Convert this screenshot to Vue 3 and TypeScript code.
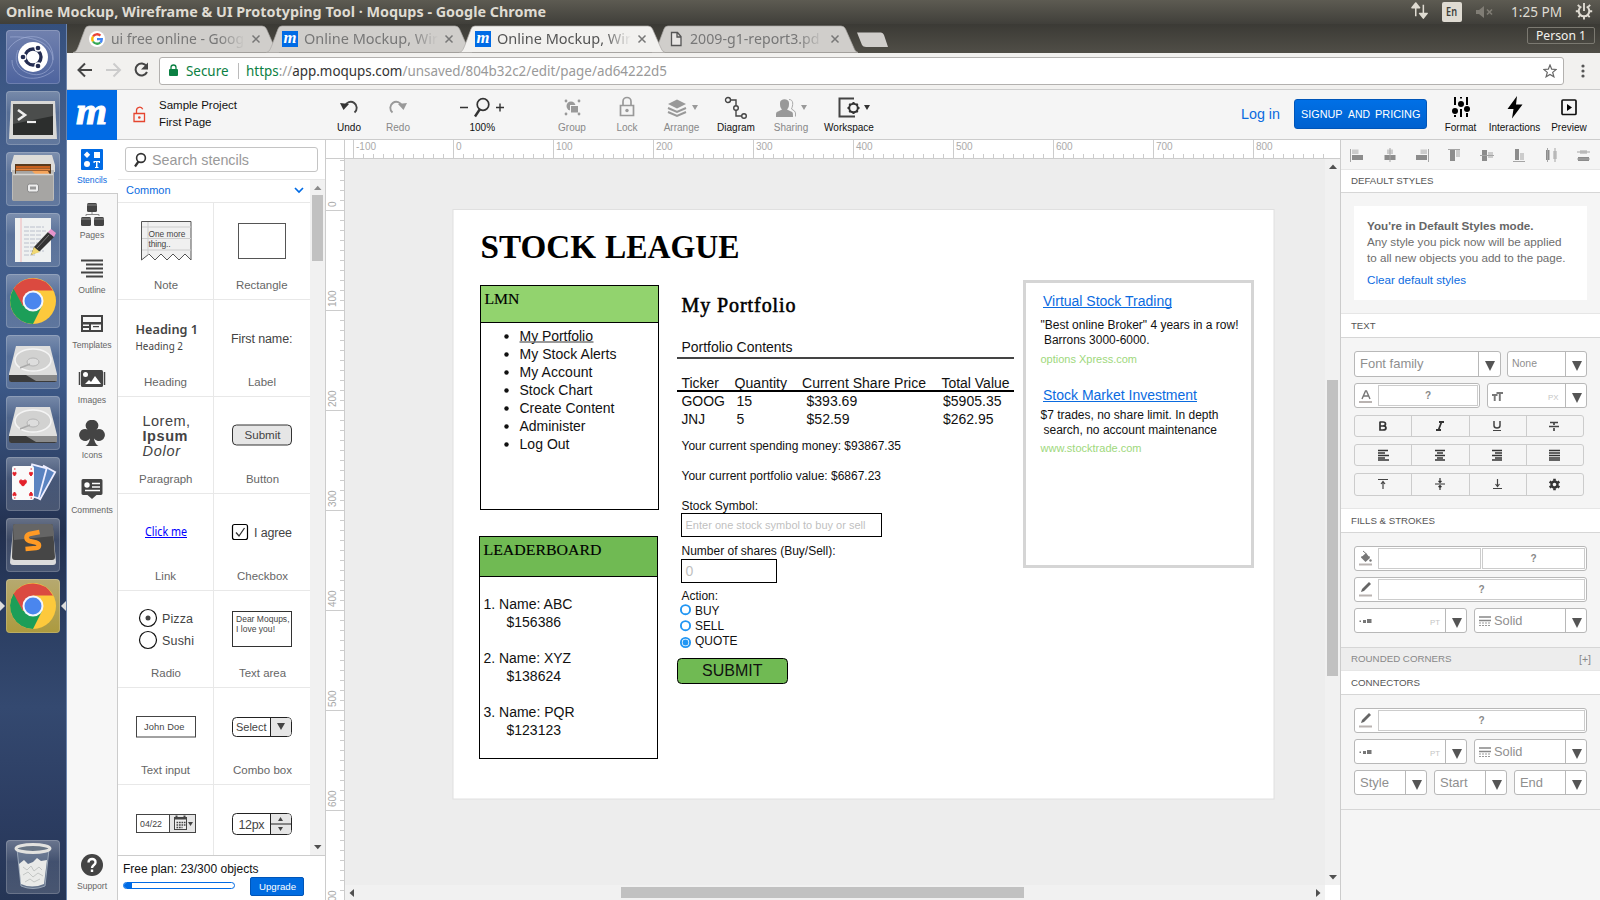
<script setup lang="ts">
import { h } from 'vue'

interface FitProps { t: string; w: number; s?: number }

// One line of text laid out at a fixed advance width.
const FitText = (p: FitProps) => {
  const size = p.s ?? 12
  const height = Math.round(size * 1.25)
  return h('svg', { width: p.w, height, 'font-size': size, fill: 'currentColor', overflow: 'visible' }, [
    h('text', { x: 0, y: Math.round(size * 0.98), textLength: p.w, lengthAdjust: 'spacingAndGlyphs' }, p.t),
  ])
}
FitText.props = ['t', 'w', 's']

const tabs = [
  { title: 'ui free online - Goog', w: 133, icon: 'google', active: false },
  { title: 'Online Mockup, Wir', w: 134, icon: 'm', active: false },
  { title: 'Online Mockup, Wir', w: 134, icon: 'm', active: true },
  { title: '2009-g1-report3.pd', w: 129.5, icon: 'file', active: false },
]

const launchers = ['dash', 'term', 'files', 'edit', 'chrome', 'disk', 'disk', 'cards', 'sublime', 'chrome on']

const navItems = ['Stencils', 'Pages', 'Outline', 'Templates', 'Images', 'Icons', 'Comments']

const stencils: { label: string; w: number }[] = [
  { label: 'Note', w: 24 }, { label: 'Rectangle', w: 51.5 },
  { label: 'Heading', w: 43 }, { label: 'Label', w: 28 },
  { label: 'Paragraph', w: 53.5 }, { label: 'Button', w: 33 },
  { label: 'Link', w: 21 }, { label: 'Checkbox', w: 51 },
  { label: 'Radio', w: 30 }, { label: 'Text area', w: 47 },
  { label: 'Text input', w: 49 }, { label: 'Combo box', w: 59 },
  { label: 'Date', w: 0 }, { label: 'Stepper', w: 0 },
]

const hMajor = [-100, 0, 100, 200, 300, 400, 500, 600, 700, 800]
const hMinor = Array.from({ length: 98 }, (_, i) => 353 + i * 10).filter((x) => x < 1340 && (x - 353) % 100 !== 0)
const vMajor = [0, 100, 200, 300, 400, 500, 600, 700]
const vMinor = Array.from({ length: 74 }, (_, i) => 160 + i * 10).filter((y) => (y - 210) % 100 !== 0)

type Line = [text: string, x: number, y: number, width: number]
const menu: [string, number][] = [
  ['My Portfolio', 73.5], ['My Stock Alerts', 97], ['My Account', 73], ['Stock Chart', 73],
  ['Create Content', 95], ['Administer', 66], ['Log Out', 50],
]
const body14: Line[] = [
  ['1. Name: ABC', 483.5, 609, 89], ['$156386', 506.5, 627, 54.5],
  ['2. Name: XYZ', 483.5, 663, 87.5], ['$138624', 506.5, 681, 54.5],
  ['3. Name: PQR', 483.5, 717, 91], ['$123123', 506.5, 735, 54.5],
  ['Portfolio Contents', 681.5, 352, 111],
  ['Ticker', 681.5, 388, 37.5], ['Quantity', 734.5, 388, 52.5], ['Current Share Price', 802, 388, 124], ['Total Value', 941.5, 388, 68],
  ['GOOG', 681.5, 406, 43.5], ['15', 736.5, 406, 15.7], ['$393.69', 806.5, 406, 50.7], ['$5905.35', 943, 406, 58.5],
  ['JNJ', 681.5, 424, 23.5], ['5', 736.5, 424, 7.8], ['$52.59', 806.5, 424, 43], ['$262.95', 943, 424, 50.5],
]
const body12: Line[] = [
  ['Your current spending money: $93867.35', 681.5, 450, 219.5],
  ['Your current portfolio value: $6867.23', 681.5, 480, 199.5],
  ['Stock Symbol:', 681.5, 510, 76.5],
  ['Number of shares (Buy/Sell):', 681.5, 555, 154],
  ['Action:', 681.5, 600, 36.5],
  ['BUY', 695, 615, 24.5], ['SELL', 695, 630, 29], ['QUOTE', 695, 645, 42.5],
  ['"Best online Broker" 4 years in a row!', 1040.5, 329, 198],
  ['Barrons 3000-6000.', 1044, 344, 105.5],
  ['$7 trades, no share limit. In depth', 1040.5, 419, 178],
  ['search, no account maintenance', 1043.5, 434, 173.5],
]
</script>

<template>
  <div class="desktop">
    <header class="menubar">
      <FitText class="win-title" t="Online Mockup, Wireframe &amp; UI Prototyping Tool · Moqups - Google Chrome" :w="540" :s="14.5" />
      <div class="tray">
        <svg width="18" height="18"><path d="M5 15V5M1 6L5 1L9 6ZM13 3V13M9 12L13 17L17 12Z" fill="#dfdbd2" stroke="#dfdbd2" stroke-width="1.6" stroke-linejoin="round" transform="scale(.95)" /></svg>
        <span class="lang"><FitText t="En" :w="11" :s="12" /></span>
        <svg class="mute" width="20" height="14"><path d="M1 5h3l5-4v12l-5-4H1z" fill="#807d75" /><path d="M12 4.500l5 5M17 4.500l-5 5" stroke="#807d75" stroke-width="1.600" /></svg>
        <FitText class="clock" t="1:25 PM" :w="51" :s="13.5" />
        <svg width="18" height="18" viewBox="0 0 18 18"><path d="M6.300 4.500a5.300 5.300 0 1 0 5.400 0" fill="none" stroke="#dfdbd2" stroke-width="2" /><path d="M9 1v8M4.800 4.800L2.800 2.800M13.200 4.800l2-2M3.700 9.200H.8M17.200 9.200h-2.900M5.300 13.200l-2 2M12.700 13.200l2 2M9 14.500v3" stroke="#dfdbd2" stroke-width="1.900" /></svg>
      </div>
    </header>

    <div class="below">
      <aside class="launcher">
        <div v-for="(l, i) in launchers" :key="i" class="tile" :class="l">
          <svg width="54" height="54" viewBox="0 0 54 54">
            <g v-if="l === 'dash'">
              <g fill="none" stroke="#a9b7dc" stroke-opacity=".55"><path d="M2 20C12 3 38 2 45 18S40 48 25 44 8 30 12 20M4 7C22 6 46 10 47 30M6 30c0 20 26 24 42 10" /></g>
              <circle cx="27" cy="27" r="15" fill="#fff" /><circle cx="27" cy="27" r="8" fill="none" stroke="#242d52" stroke-width="3.400" />
              <g fill="#242d52" stroke="#fff" stroke-width="1.300"><circle cx="17" cy="27" r="3" /><circle cx="32" cy="18" r="3" /><circle cx="32" cy="36" r="3" /></g>
            </g>
            <g v-else-if="l === 'term'">
              <path d="M5 10h44l2 38H3z" fill="#d8d8d6" /><rect x="7" y="13" width="40" height="31" fill="#2c2e2d" /><path d="M7 13h40v12L7 33z" fill="#4b4d4c" />
              <path d="M12 19l7 5-7 5" fill="none" stroke="#eee" stroke-width="2.600" /><path d="M21 31h9" stroke="#eee" stroke-width="2.200" />
            </g>
            <g v-else-if="l === 'files'">
              <path d="M8 3h38l3 10v7H5v-7z" fill="#dddcd9" /><path d="M6 18h42v29q0 2-2 2H8q-2 0-2-2z" fill="#bdbcba" /><path d="M9 12h36v12H9z" fill="#5a3b1f" /><path d="M10 14h34v2H10z" fill="#c8601f" /><path d="M10 16.500h34v2H10z" fill="#e8843c" /><path d="M11 19h31l2 4H10z" fill="#f5a55c" />
              <path d="M10 19h16l3 3H47v27H7V22h3z" fill="#a6a5a3" /><path d="M7 22.500h40" stroke="#d5d5d3" stroke-width="1.500" /><rect x="21.500" y="32" width="11" height="8" rx="2" fill="#eee" stroke="#8a8a8a" /><rect x="24" y="34.500" width="6" height="3" fill="#999" />
            </g>
            <g v-else-if="l === 'edit'">
              <rect x="9" y="5" width="36" height="44" fill="#eff1f1" /><path d="M15 5v44" stroke="#f0b6b8" /><path d="M18 14h20M18 18h22M18 22h17M18 26h20M18 30h14M18 34h17M18 38h20M18 42h12" stroke="#bbc0cc" stroke-width="1" stroke-dasharray="5 1" />
              <path d="M25 42l3-8L42 19l6 5-14 14z" fill="#333" /><path d="M25 42l3-8 6 5z" fill="#f0d873" /><path d="M42 19l3-3 5 4-2 4z" fill="#e694cb" /><path d="M31 35l12-13" stroke="#777" />
            </g>
            <g v-else-if="l.startsWith('chrome')">
              <circle cx="27" cy="27" r="23" fill="#fdc93c" />
              <path d="M7.100 15.500A23 23 0 0 1 47 16.500H27L17 32z" fill="#db4a40" />
              <path d="M7.600 14.700A23 23 0 0 0 27 50L36 32 27 27 17 32z" fill="#1c9e58" />
              <circle cx="27" cy="27" r="10.500" fill="#f4f6fb" /><circle cx="27" cy="27" r="8.500" fill="#4a86ee" />
            </g>
            <g v-else-if="l === 'disk'">
              <path d="M10 11h34l7 28v5q0 3-3 3H6q-3 0-3-3v-5z" fill="#dededd" /><path d="M3 40h48v5q0 2-2 2H5q-2 0-2-2z" fill="#3b3b3b" /><path d="M20 40h31v6H30z" fill="#8a8a8a" />
              <ellipse cx="27" cy="25" rx="18" ry="11" fill="#d2d2d1" stroke="#f4f4f4" stroke-width="1.500" /><ellipse cx="27" cy="27" rx="6" ry="4" fill="#ddd" stroke="#b4b4b4" /><path d="M14 33l10-4" stroke="#aaa" stroke-width="1.500" />
            </g>
            <g v-else-if="l === 'cards'">
              <g fill="#5a83c0" stroke="#eef" stroke-width="1.800"><rect x="30" y="11" width="13" height="31" transform="rotate(29 38 25)" /><rect x="22" y="9" width="15" height="31" transform="rotate(15 30 24)" /></g>
              <rect x="6" y="9" width="22" height="34" rx="2" fill="#fafafa" /><path d="M17 29c-6-4-3-8 0-5 3-3 6 1 0 5z" fill="#e3212b" stroke="#e3212b" /><path d="M8.500 19c-3-3-1-5 0-3 1-2 3 0 0 3zM25 19c-3-3-1-5 0-3 1-2 3 0 0 3zM8.500 35c-3 3-1 5 0 3 1 2 3 0 0-3zM25 35c-3 3-1 5 0 3 1 2 3 0 0-3zM8 12h1.500M24.500 12H26M8 41h1.500M24.500 41H26" fill="#e3212b" stroke="#e3212b" />
            </g>
            <g v-else>
              <path d="M7 12h40l3 32q0 3-3 3H7q-3 0-3-3z" fill="#dcdcdc" /><path d="M9 6h36q2 0 2 3l2 30q0 3-3 3H9q-3 0-3-3L7 9q0-3 2-3z" fill="#464646" /><path d="M8 22l40-4-1-10q0-2-2-2H9Q7 6 7 9z" fill="#656565" />
              <path d="M33.500 14L23.500 16q-3 1-3 3.500t3 3.500L30 24.500q3 1 3 3t-3 2.500L19.500 31" fill="none" stroke="#ff9a24" stroke-width="4.600" />
            </g>
          </svg>
          <template v-if="l === 'chrome on'"><i class="pip left"></i><i class="pip right"></i></template>
        </div>
        <div class="tile trash">
          <svg width="54" height="54" viewBox="0 0 54 54">
            <path d="M11 9l4 37q12 5 24 0l4-37z" fill="#8fa0b5" fill-opacity=".4" stroke="#9aa7b8" /><path d="M13 24l5-4 4 4 5-2 4-4 4 3 6-1-3 24q-12 5-23 0z" fill="#e9eae8" /><path d="M17 27l4 3 4-4 3 5 5-4 3 3M17 35l5-3 5 5 5-4 5 3M19 42l5-3 4 3 6-3" stroke="#c3c6c4" fill="none" />
            <ellipse cx="27" cy="8.500" rx="17" ry="4" fill="#687585" stroke="#e2e2df" stroke-width="3" />
          </svg>
        </div>
      </aside>

      <main class="chrome-win">
        <div class="tabstrip">
          <div v-for="(tab, i) in tabs" :key="i" class="tab" :class="{ active: tab.active }">
            <svg class="tab-shape" width="206" height="28"><path d="M0 27.500C3 27 4 25 6 20L12 4Q13 1 16 1H189Q192 1 193.500 4L201 21Q203 27 206 27.500Z" /></svg>
            <svg class="favicon" width="16" height="16" viewBox="0 0 16 16">
              <g v-if="tab.icon === 'google'"><circle cx="8" cy="8" r="8" fill="#fff" /><g fill="none" stroke-width="2.300"><path d="M4 5.500A4.800 4.800 0 0 1 11.400 4.600" stroke="#ea4335" /><path d="M4 5.500a4.800 4.800 0 0 0 0 5" stroke="#fbbc05" /><path d="M4 10.500a4.800 4.800 0 0 0 7.300 1" stroke="#34a853" /><path d="M11.300 11.500A4.500 4.500 0 0 0 12.800 8.200H8" stroke="#4285f4" /></g></g>
              <g v-else-if="tab.icon === 'm'"><rect width="16" height="16" fill="#006be5" /><text x="1.500" y="12" class="m-small" textLength="13" lengthAdjust="spacingAndGlyphs">m</text></g>
              <path v-else d="M3.500 1.500h6l3.500 4v9H3.500zM9 1.500V6h4" fill="#e8e6e4" stroke="#555" stroke-width="1.300" />
            </svg>
            <div class="tab-title"><FitText :t="tab.title" :w="tab.w" :s="14.5" /></div>
            <svg class="close" width="10" height="10"><path d="M1.500 1.500l7 7M8.500 1.500l-7 7" stroke="#777" stroke-width="1.500" /></svg>
          </div>
          <svg class="newtab" width="34" height="16"><path d="M1 .5H25Q27 .5 28 3L32 15H10Q7 15 6 13Z" fill="#d0cecb" /></svg>
          <span class="person"><FitText t="Person 1" :w="50" :s="12" /></span>
        </div>
        <div class="urlbar">
          <svg width="92" height="36" fill="none" stroke-width="2"><path d="M25 18H12.500M18 11.500L11.500 18l6.500 6.500" stroke="#454545" /><path d="M39 18H52M46.500 11.500L53 18l-6.500 6.500" stroke="#ccc" /><path d="M79.500 14A6 6 0 1 0 80 20" stroke="#454545" /><path d="M81 10.500v7h-7z" fill="#454545" /></svg>
          <div class="omnibox">
            <svg width="10" height="14"><rect x="0" y="5" width="9" height="7" rx="1" fill="#0b8043" /><path d="M2 6V3.500a2.500 2.500 0 0 1 5 0V6" fill="none" stroke="#0b8043" stroke-width="1.300" /></svg>
            <FitText class="secure" t="Secure" :w="42.500" :s="14" />
            <i class="sep"></i>
            <svg class="url" width="421" height="18"><text x="0" y="14" textLength="421" lengthAdjust="spacingAndGlyphs"><tspan fill="#0b8043">https</tspan><tspan fill="#999">://</tspan><tspan fill="#333">app.moqups.com</tspan><tspan fill="#999">/unsaved/804b32c2/edit/page/ad64222d5</tspan></text></svg>
            <svg class="star" width="14" height="14"><path d="M7 1l1.700 4.200 4.500.3-3.500 2.900 1.200 4.400L7 10.400l-3.900 2.400 1.200-4.400L.8 5.500l4.500-.3z" fill="none" stroke="#666" stroke-width="1.200" /></svg>
          </div>
          <svg class="dots" width="4" height="14" fill="#555"><circle cx="2" cy="2" r="1.600" /><circle cx="2" cy="7" r="1.600" /><circle cx="2" cy="12" r="1.600" /></svg>
        </div>

        <div class="apphead">
          <div class="logo"><svg width="50" height="50"><text x="9" y="34" class="m-big" textLength="31" lengthAdjust="spacingAndGlyphs">m</text></svg></div>
          <svg class="redlock" width="14" height="17"><path d="M1 7.500h10.500v8H1zM3.500 7.500V4.500a3.200 3.200 0 0 1 6.200-1.200" fill="none" stroke="#e5452f" stroke-width="1.300" /><circle cx="6.300" cy="11.500" r="1.300" fill="#e5452f" /></svg>
          <div class="project"><FitText t="Sample Project" :w="78" :s="11.7" /><FitText t="First Page" :w="52.500" :s="11.7" /></div>
          <div class="tool w49"><svg width="20" height="24"><path d="M6 10A6 6 0 1 1 15.500 16.500" fill="none" stroke="#444" stroke-width="1.900" /><path d="M1 7l9 1-5.500 6z" fill="#333" /></svg><span>Undo</span></div>
          <div class="tool w49 dim"><svg width="20" height="24"><path d="M14 10A6 6 0 1 0 4.500 16.500" fill="none" stroke="#999" stroke-width="1.900" /><path d="M19 7l-9 1 5.500 6z" fill="#999" /></svg><span>Redo</span></div>
          <div class="tool w119"><svg width="48" height="24"><path d="M2 11.500h8M38 11.500h8M42 7.500v8" stroke="#333" stroke-width="1.400" /><circle cx="25" cy="8.500" r="5.800" fill="none" stroke="#333" stroke-width="1.700" /><path d="M22 13l-5 7.500" stroke="#333" stroke-width="2.400" /></svg><span class="down">100%</span></div>
          <div class="tool w60 dim"><svg width="18" height="24" fill="#999"><circle cx="8" cy="10" r="4.500" /><rect x="7.500" y="9.500" width="8" height="7.500" stroke="#f5f5f5" /><circle cx="3" cy="5" r="1.400" /><circle cx="16" cy="5" r="1.400" /><circle cx="3" cy="18" r="1.400" /><circle cx="16" cy="18" r="1.400" /></svg><span>Group</span></div>
          <div class="tool w50 dim"><svg width="18" height="24"><path d="M2.500 9.500h13v10h-13zM5 9.500V5.500a4 4 0 0 1 8 0v4" fill="none" stroke="#999" stroke-width="1.700" /><circle cx="9" cy="14.500" r="1.700" fill="#999" /></svg><span>Lock</span></div>
          <div class="tool w59 dim"><svg width="32" height="24"><path d="M2 8l9-4.500L20 8l-9 4.500z" fill="#999" /><path d="M2 12l9 4 9-4M2 16l9 4 9-4" fill="none" stroke="#999" stroke-width="2" /><path d="M26 9h6l-3 5z" fill="#999" /></svg><span>Arrange</span></div>
          <div class="tool w50"><svg width="24" height="24" fill="none" stroke="#444" stroke-width="1.400"><circle cx="4" cy="4" r="2.500" /><path d="M6.500 4H12v5.500M12 14v6h5.500" /><circle cx="12" cy="12" r="2.300" /><circle cx="20" cy="20" r="2.300" /></svg><span>Diagram</span></div>
          <div class="tool w60 dim"><svg width="32" height="24" fill="#999"><path d="M1 21c0-4 0-5 2-5.500l4-2c-2-2-2-4-2-6.500 0-5 9-5 9 0 0 2.500 0 4.500-2 6.500l4 2c2 .5 2 1.500 2 5.500z" /><path d="M14 3.500c5 0 4 6 2.500 9.500l3 2q1.500 1 1 5.500" fill="none" stroke="#aaa" /><path d="M26 9h6l-3 5z" /></svg><span>Sharing</span></div>
          <div class="tool w56"><svg class="ws" width="34" height="24"><path d="M18 2.500H3.500v18H19" fill="none" stroke="#444" stroke-width="2" /><circle cx="17.500" cy="12" r="4.300" fill="none" stroke="#333" stroke-width="2" /><path d="M17.500 6v2M17.500 16v2M11.500 12h2M21.500 12h2M13.300 7.800l1.400 1.400M20.300 14.800l1.400 1.400M13.300 16.200l1.400-1.400M20.300 9.200l1.400-1.400" stroke="#333" stroke-width="2" /><path d="M28 9h6l-3 5z" fill="#333" /></svg><span>Workspace</span></div>
          <div class="spacer"></div>
          <FitText class="login" t="Log in" :w="39" :s="14.5" />
          <div class="signup"><FitText t="SIGNUP" :w="41.500" :s="11.5" /><FitText t="AND" :w="22" :s="11.5" /><FitText t="PRICING" :w="45.500" :s="11.5" /></div>
          <div class="tool w49"><svg width="20" height="24" fill="#000"><path d="M4 1v8M4 19v2M10 1v1.500M10 13v8M16 1v8M16 17v4" stroke="#000" stroke-width="2" /><circle cx="4" cy="15" r="3" /><circle cx="10" cy="8" r="3" /><circle cx="16" cy="13" r="3" /></svg><span>Format</span></div>
          <div class="tool w59"><svg width="18" height="24"><path d="M11 0L1.500 13h6L6 22.500 16.500 8.500H10z" /></svg><span>Interactions</span></div>
          <div class="tool w50"><svg width="18" height="24"><rect x="2" y="4" width="14" height="14.500" rx="1" fill="none" stroke="#111" stroke-width="1.700" /><path d="M7 8l5 3.500L7 15z" /></svg><span>Preview</span></div>
        </div>

        <div class="workspace">
          <nav class="leftnav">
            <div v-for="n in navItems" :key="n" class="nav" :class="{ sel: n === 'Stencils' }">
              <svg width="28" height="28" viewBox="0 0 28 28" fill="#444">
                <g v-if="n === 'Stencils'"><rect x="3" y="4" width="22" height="21" rx="1" fill="#006be5" /><g fill="#fff"><path d="M9 6.500l3.200 3.200L9 12.900 5.800 9.700z" /><rect x="16" y="7" width="6" height="6" /><circle cx="9" cy="19" r="3" /><path d="M15.500 16h6.500v2h-1l-.5-1h-1v5h1v1h-3.500v-1h1v-5h-1l-.5 1h-1z" /></g></g>
                <g v-else-if="n === 'Pages'"><rect x="9" y="3" width="10" height="9" rx="1.500" /><rect x="3" y="17" width="10" height="9" rx="1.500" /><rect x="16" y="17" width="10" height="9" rx="1.500" /><path d="M14 12v2.500M8 16v-1.500h13V16M9 5h10M3 19h10M16 19h10" stroke="#888" fill="none" /></g>
                <path v-else-if="n === 'Outline'" d="M3 6h22M8 10h17M8 14h17M3 18h22M8 22h17" stroke="#444" stroke-width="2" transform="translate(0 -.5)" />
                <path v-else-if="n === 'Templates'" fill-rule="evenodd" d="M3 5h22v17H3zM5 7v5h18V7zM5 14.500v1.500h6v-1.500zM5 18v2h6v-2zM13 14.500v5.500h10v-5.500zM15 16v1.200h6V16z" />
                <g v-else-if="n === 'Images'"><rect x="3" y="5" width="22" height="17" rx="1.500" /><path d="M1.500 7v13M26.500 7v13" stroke="#444" stroke-width="1.500" /><circle cx="7.500" cy="9.500" r="2.500" fill="#fff" /><path d="M7 19l4-4 2 2 4-6 6 8z" fill="#fff" /></g>
                <path v-else-if="n === 'Icons'" d="M14 0a5.500 5.500 0 0 1 4.500 9.500a6 6 0 1 1-2.500 9q1 6 4.500 7.500h-13q3.500-1.500 4.500-7.500a6 6 0 1 1-2.500-9A5.500 5.500 0 0 1 14 0z" />
                <g v-else><path d="M5 4h18q1.500 0 1.500 1.500v13q0 1-1.500 1.500h-4.500L14 24l-4.500-4H5q-1.500-.5-1.500-1.500v-13Q3.500 4 5 4z" /><circle cx="9" cy="10" r="2.700" fill="#fff" /><path d="M14 8.500h8M14 12h8M7 15.500h15" stroke="#fff" stroke-width="1.300" /></g>
              </svg>
              <span>{{ n }}</span>
            </div>
            <div class="nav support">
              <svg width="28" height="28"><circle cx="14" cy="14" r="11" fill="#444" /><path d="M10.500 11.500c0-5 7.500-4.500 7 0 0 2.500-3.500 2.500-3.500 5.500M14 18.500v2.500" fill="none" stroke="#fff" stroke-width="2.400" /></svg>
              <span>Support</span>
            </div>
          </nav>

          <section class="stencils">
            <div class="search"><svg width="14" height="16"><circle cx="8" cy="6" r="4.400" fill="none" stroke="#333" stroke-width="1.600" /><path d="M5.500 9.500L2 14.500" stroke="#333" stroke-width="2.200" /></svg><FitText t="Search stencils" :w="97" :s="14.3" /></div>
            <div class="scroller">
              <div class="inner">
                <div class="common"><FitText t="Common" :w="44.500" :s="11" /><svg width="10" height="8"><path d="M1 2L5 6l4-4" fill="none" stroke="#006be5" stroke-width="1.700" /></svg></div>
                <div class="grid">
                  <div v-for="s in stencils" :key="s.label" class="cell">
                    <svg width="95" height="75" class="pv">
                      <g v-if="s.label === 'Note'"><path d="M23.500 18.500H73V57l-6-6-6 6-6-6-6 6-6-6-6 6-6-6-7.500 6z" fill="#f0f0f0" stroke="#555" /><path d="M30 19v33M24 24h49M24 35.500h49M24 47h49" stroke="#ccc" /><text x="30.500" y="33.500" font-size="8.500" textLength="37" lengthAdjust="spacingAndGlyphs">One more</text><text x="30.500" y="44" font-size="8.500" textLength="22">thing..</text></g>
                      <rect v-else-if="s.label === 'Rectangle'" x="24.500" y="20.500" width="47" height="35" fill="#fff" stroke="#555" />
                      <g v-else-if="s.label === 'Heading'" class="noto"><text x="17.500" y="34" font-size="12.800" font-weight="600" textLength="62.500" lengthAdjust="spacingAndGlyphs">Heading 1</text><text x="17.500" y="50" font-size="11" textLength="47.500" lengthAdjust="spacingAndGlyphs">Heading 2</text></g>
                      <text v-else-if="s.label === 'Label'" x="17" y="43" font-size="12.500" textLength="61.500">First name:</text>
                      <g v-else-if="s.label === 'Paragraph'" font-size="14.500"><text x="24.500" y="29" textLength="47.500">Lorem,</text><text x="24.500" y="43.500" textLength="45" font-weight="bold">Ipsum</text><text x="24.500" y="58.500" textLength="37.500" font-style="italic">Dolor</text></g>
                      <g v-else-if="s.label === 'Button'"><rect x="18.500" y="28" width="59" height="20" rx="4" fill="#e6e6e6" stroke="#333" /><text x="30.500" y="42" font-size="11.500" textLength="36" lengthAdjust="spacingAndGlyphs">Submit</text></g>
                      <g v-else-if="s.label === 'Link'" class="noto"><text x="27" y="42" font-size="12" fill="#00f" textLength="42" lengthAdjust="spacingAndGlyphs">Click me</text><path d="M27 43.500h42" stroke="#00f" /></g>
                      <g v-else-if="s.label === 'Checkbox'"><rect x="18.500" y="30.500" width="15" height="15" rx="2" fill="#fff" stroke="#000" stroke-width="1.200" /><path d="M22 38.500l3 3.500 5.500-8" fill="none" stroke="#333" stroke-width="1.300" /><text x="40" y="43" font-size="12.500" textLength="38">I agree</text></g>
                      <g v-else-if="s.label === 'Radio'"><g fill="#fff" stroke="#111" stroke-width="1.200"><circle cx="30" cy="27" r="8.500" /><circle cx="30" cy="49" r="8.500" /></g><circle cx="30" cy="27" r="2.500" /><text x="44" y="32" font-size="12.500" textLength="31">Pizza</text><text x="44" y="54" font-size="12.500" textLength="32">Sushi</text></g>
                      <g v-else-if="s.label === 'Text area'" font-size="8.500"><rect x="18.500" y="20.500" width="59" height="35" fill="#fff" stroke="#333" /><text x="22" y="31" textLength="53.500">Dear Moqups,</text><text x="22" y="41" textLength="39">I love you!</text></g>
                      <g v-else-if="s.label === 'Text input'"><rect x="18.500" y="28.500" width="59" height="20.500" fill="#fff" stroke="#444" /><text x="26" y="42" font-size="9.300" textLength="40.500">John Doe</text></g>
                      <g v-else-if="s.label === 'Combo box'"><rect x="18.500" y="29.500" width="59" height="19" rx="4" fill="#fff" stroke="#222" /><path d="M56.500 30H74q3 0 3 3v12q0 3-3 3H56.500z" fill="#e6e6e6" /><path d="M56.500 30v18" stroke="#222" /><path d="M63 35h8l-4 7z" /><text x="22" y="43" font-size="11" textLength="30.500">Select</text></g>
                      <g v-else-if="s.label === 'Date'"><rect x="18.500" y="29.500" width="59" height="18" fill="#fff" stroke="#444" /><path d="M52 30h25v17H52z" fill="#e6e6e6" /><path d="M51.500 30v18" stroke="#444" /><text x="22" y="42" font-size="8.800" textLength="22">04/22</text><rect x="56.500" y="32.500" width="12" height="12" fill="#eee" stroke="#444" /><path d="M58.500 37.500h9M58.500 40h9M58.500 42.500h6" stroke="#444" stroke-width="1.700" stroke-dasharray="1.700 .8" /><path d="M58.500 30.500v4M66.500 30.500v4M56.500 33.500h12" stroke="#444" stroke-width="2" /><path d="M70 37h5l-2.500 4z" /></g>
                      <g v-else><rect x="18.500" y="28.500" width="59" height="21" rx="4" fill="#fff" stroke="#222" /><path d="M56.500 29H74q3 0 3 3v14q0 3-3 3H56.500z" fill="#e6e6e6" /><path d="M56.500 29v20M56.500 39h21" stroke="#222" /><path d="M64 36h5l-2.500-4zM64 42h5l-2.500 4z" /><text x="24.500" y="43.500" font-size="12.500" textLength="26">12px</text></g>
                    </svg>
                    <FitText v-if="s.w" :t="s.label" :w="s.w" :s="11.4" />
                  </div>
                </div>
              </div>
              <div class="sbar"><svg width="15" height="675"><path d="M4 10h7.500L7.700 5.800z" fill="#8a8a8a" /><rect x="2" y="15" width="11" height="66" fill="#c1c1c1" /><path d="M4 665h7.500l-3.700 4.200z" fill="#505050" /></svg></div>
            </div>
            <div class="plan">
              <FitText t="Free plan: 23/300 objects" :w="135.500" :s="12" />
              <div class="planrow"><div class="bar"><i></i></div><div class="upgrade"><FitText t="Upgrade" :w="37" :s="9.500" /></div></div>
            </div>
          </section>

          <section class="board">
            <svg class="ruler-h" width="1014" height="19" viewBox="326 140 1014 19">
              <path v-for="x in hMinor" :key="x" :d="`M${x + .5} 154v4`" class="tick" />
              <g v-for="v in hMajor" :key="v"><path :d="`M${v + 453.5} 140v18`" class="tick" /><text :x="v + 456" y="150">{{ v }}</text></g>
              <path d="M344.500 140v18M326 158.500H1340" class="tick" />
            </svg>
            <div class="lower">
              <svg class="ruler-v" width="19" height="741" viewBox="326 159 19 741">
                <path v-for="y in vMinor" :key="y" :d="`M340 ${y + .5}h4`" class="tick" />
                <g v-for="v in vMajor" :key="v"><path :d="`M326 ${v + 210.5}h18`" class="tick" /><text :transform="`translate(336 ${v + 207}) rotate(-90)`">{{ v }}</text></g>
                <path d="M344.500 159V900" class="tick" />
              </svg>
              <div class="view">
                <svg class="canvas" width="980" height="726" viewBox="345 159 980 726">
                  <rect x="453" y="209.500" width="821" height="589.500" fill="#fff" stroke="#e0e0e0" />
                  <g class="serif">
                    <g font-size="34" font-weight="bold"><text x="480.500" y="257.500" textLength="115.500" lengthAdjust="spacingAndGlyphs">STOCK</text><text x="605" y="257.500" textLength="134.500" lengthAdjust="spacingAndGlyphs">LEAGUE</text></g>
                    <text x="681.500" y="312" font-size="20" class="semi" textLength="114">My Portfolio</text>
                  </g>
                  <g stroke="#000" fill="#fff">
                    <rect x="480.500" y="285.500" width="178" height="224" /><rect x="480.500" y="285.500" width="178" height="37" fill="#92d36e" />
                    <rect x="479.500" y="536.500" width="178" height="222" /><rect x="479.500" y="536.500" width="178" height="40" fill="#70ba53" />
                    <rect x="681.500" y="513.500" width="200" height="23" /><rect x="681.500" y="559.500" width="95" height="23" />
                    <rect x="677.500" y="658.500" width="110" height="25" rx="4" fill="#70ba53" />
                  </g>
                  <g class="serif head"><text x="484.500" y="304" textLength="35" lengthAdjust="spacingAndGlyphs">LMN</text><text x="483.500" y="555" textLength="118" lengthAdjust="spacingAndGlyphs">LEADERBOARD</text></g>
                  <g font-size="14">
                    <template v-for="(m, i) in menu" :key="m[0]"><circle cx="506.500" :cy="336.500 + i * 18" r="2.200" /><text x="519.500" :y="341 + i * 18" :textLength="m[1]">{{ m[0] }}</text></template>
                    <text v-for="l in body14" :key="l[0]" :x="l[1]" :y="l[2]" :textLength="l[3]" lengthAdjust="spacingAndGlyphs">{{ l[0] }}</text>
                    <g fill="#0b6bdf"><text x="1043" y="306" textLength="129">Virtual Stock Trading</text><text x="1043" y="400" textLength="154">Stock Market Investment</text></g>
                  </g>
                  <text v-for="l in body12" :key="l[0]" :x="l[1]" :y="l[2]" :textLength="l[3]" font-size="12" lengthAdjust="spacingAndGlyphs">{{ l[0] }}</text>
                  <g font-size="11" fill="#9ed87c"><text x="1040.500" y="363" textLength="96.500">options Xpress.com</text><text x="1040.500" y="452" textLength="101">www.stocktrade.com</text></g>
                  <g fill="#bfbfbf"><text x="685.500" y="529" font-size="11" textLength="180">Enter one stock symbol to buy or sell</text><text x="685.500" y="576" font-size="14">0</text></g>
                  <text x="702" y="676" font-size="16" textLength="60.500" lengthAdjust="spacingAndGlyphs">SUBMIT</text>
                  <path d="M1043 307.500h129M1043 401.500h154" stroke="#0b6bdf" />
                  <path d="M519.500 342h74" stroke="#777" stroke-width="1.600" /><path d="M677 358h337" stroke="#444" stroke-width="2" /><path d="M677 391h337" stroke="#000" stroke-width="2" />
                  <rect x="1024.500" y="281.500" width="228" height="285" fill="none" stroke="#d5d5d5" stroke-width="3" />
                  <g fill="#fff" stroke="#2196f3" stroke-width="1.900"><circle cx="685.500" cy="609.700" r="4.600" /><circle cx="685.500" cy="625.700" r="4.600" /><circle cx="685.500" cy="642.500" r="4.600" /></g><circle cx="685.500" cy="642.500" r="2.900" fill="#2196f3" />
                </svg>
                <svg class="vbar" width="15" height="726"><path d="M4 10h8L8 5.500z" fill="#505050" /><rect x="2" y="221" width="11" height="296" fill="#c1c1c1" /><path d="M4 716h8l-4 4.500z" fill="#505050" /></svg>
                <svg class="hbar" width="980" height="15"><path d="M9 4v8L4.500 8z" fill="#505050" /><rect x="276" y="2" width="403" height="11" fill="#c1c1c1" /><path d="M971 4v8l4.500-4z" fill="#505050" /></svg>
              </div>
            </div>
          </section>

          <aside class="props">
            <svg class="aligns" width="259" height="29">
              <g fill="#8c8c8c"><path d="M11 15h11v5H11zM43.500 15h11v5h-11zM75 15h11v5H75zM109 10h5v11h-5zM141 10h5v11h-5zM174 9h4v11h-4zM205 10h3.500v10H205zM237 17h11v4h-11z" /></g>
              <g fill="#ccc"><path d="M11 9.500h6.500V14H11zM46 9.500h6V14h-6zM79.500 9.500h6.500V14h-6.500zM115 10h4v7h-4zM147 12h5v6h-5zM179 13h4v7h-4zM212 11h4v8h-4zM239 10h7v4h-7z" /></g>
              <path d="M9.500 9v13M49 8v14M87.500 9v13M107 9.500h12M139 15.500h14M172 21.500h12M206.500 8v14M214 8v14M236 12h13M236 19h13" stroke="#a5a5a5" />
            </svg>
            <div class="ph white h22"><FitText t="DEFAULT STYLES" :w="82.500" :s="9.500" /></div>
            <div class="pb info">
              <div class="card"><FitText class="b" t="You're in Default Styles mode." :w="166.500" :s="11.300" /><FitText t="Any style you pick now will be applied" :w="194.500" :s="11.300" /><FitText t="to all new objects you add to the page." :w="198.500" :s="11.300" /><FitText class="clear" t="Clear default styles" :w="99" :s="11.300" /></div>
            </div>
            <div class="ph white h23"><FitText t="TEXT" :w="24.500" :s="9.500" /></div>
            <div class="pb text">
              <div class="row"><div class="box w147 h26"><FitText class="grey" t="Font family" :w="63.500" :s="12.800" /><b class="arr"></b></div><div class="box w80 h26"><FitText class="grey n" t="None" :w="25" :s="10.500" /><b class="arr s"></b></div></div>
              <div class="row">
                <div class="box w126"><svg class="ico" width="23" height="23"><path d="M7 15l3.500-8h1L15 15M8.500 12h5" fill="none" stroke="#777" stroke-width="1.400" /><path d="M4 18h13" stroke="#b9b3b1" stroke-width="2" /></svg><span class="in">?</span></div>
                <div class="box w100"><svg class="ico" width="60" height="23"><path d="M4 11h5.500M6.700 11v6M8.500 9h6.500M11.800 9v8" fill="none" stroke="#777" stroke-width="1.900" /></svg><FitText class="unit" t="PX" :w="10.500" :s="7.500" /><b class="arr s"></b></div>
              </div>
              <div class="seg"><span><svg><path d="M1.500 1H5q2.500 0 2.500 2T5 5H1.500M5 5q3 0 3 2T5 9H2V1" fill="none" stroke="#333" stroke-width="1.700" /></svg></span><span><svg><path d="M4 1h5M1 9h5M6.500 1l-3 8" stroke="#333" stroke-width="1.800" /></svg></span><span><svg><path d="M2 0v4.500q0 2.500 3 2.500t3-2.500V0" fill="none" stroke="#444" stroke-width="1.500" /><path d="M1 9.500h8" stroke="#444" /></svg></span><span><svg><path d="M1 1.500h8M0 5.500h10M5 1v3M5 7v3" stroke="#444" stroke-width="1.700" /></svg></span></div>
              <div class="seg"><span><svg><path d="M0 .5h10M0 3h7M0 5.500h11M0 8h7M0 10h11" stroke="#333" stroke-width="1.300" /></svg></span><span><svg><path d="M0 .5h10M2 3h6M0 5.500h10M2 8h6M0 10h10" stroke="#333" stroke-width="1.300" /></svg></span><span><svg><path d="M0 .5h10M3 3h7M0 5.500h10M3 8h7M0 10h10" stroke="#333" stroke-width="1.300" /></svg></span><span><svg><path d="M0 .5h11M0 3h11M0 5.500h11M0 8h11M0 10h11" stroke="#333" stroke-width="1.300" /></svg></span></div>
              <div class="seg h23x"><span><svg><path d="M0 .5h10M5 10V3M3 5l2-2.500L7 5" fill="none" stroke="#444" stroke-width="1.200" /></svg></span><span><svg><path d="M0 5h10M5 -1v4M3.500 2L5 3.500 6.500 2M5 11V7M3.500 8L5 6.500 6.500 8" fill="none" stroke="#333" stroke-width="1.200" /></svg></span><span><svg><path d="M1 9.500h9M5.500 0v7M3.500 5l2 2.500L7.500 5" fill="none" stroke="#444" stroke-width="1.200" /></svg></span><span><svg><circle cx="5.500" cy="5.500" r="3" fill="none" stroke="#333" stroke-width="2.400" /><path d="M5.500-.2v2M5.500 9.200v2M.6 2.600l1.700 1M8.700 7.400l1.700 1M.6 8.400l1.700-1M8.700 3.600l1.700-1" stroke="#333" stroke-width="2.600" /></svg></span></div>
            </div>
            <div class="ph white h23"><FitText t="FILLS &amp; STROKES" :w="84" :s="9.500" /></div>
            <div class="pb fills">
              <div class="row"><div class="box w233"><svg class="ico" width="23" height="23"><path d="M6 10.500l5-4.500 4 5-4.500 4z" fill="#777" /><path d="M8 4l3.500 3M6 10h9" stroke="#777" /><circle cx="15.500" cy="13.500" r="1.200" fill="#777" /><path d="M4 17.500h13" stroke="#b9b3b1" stroke-width="2" /></svg><span class="in"></span><span class="in">?</span></div></div>
              <div class="row"><div class="box w233"><svg class="ico" width="23" height="23"><path d="M6 14l1-3 7-7 2 2-7 7z" fill="#666" /><path d="M4 17.500h13" stroke="#b9b3b1" stroke-width="2" /></svg><span class="in">?</span></div></div>
              <div class="row gap"><div class="box w113"><svg class="ico" width="75" height="23" fill="#777"><path d="M4.500 11.500h1.500v1.500h-1.500zM8 11h3v3H8zM12 10h4.500v4H12z" /></svg><FitText class="unit" t="PT" :w="10" :s="7.500" /><b class="arr s"></b></div><div class="box w113"><svg class="ico" width="20" height="23"><path d="M4 8h12M4 11.500h12" stroke="#888" stroke-width="1.600" /><path d="M4 14h12M4 16.500h12" stroke="#999" stroke-dasharray="2 1" /></svg><FitText class="grey z" t="Solid" :w="28.500" :s="12.800" /><b class="arr s"></b></div></div>
            </div>
            <div class="ph rc"><FitText t="ROUNDED CORNERS" :w="100.500" :s="9.500" /><FitText t="[+]" :w="12" :s="10" /></div>
            <div class="ph white h23"><FitText t="CONNECTORS" :w="69" :s="9.500" /></div>
            <div class="pb conn">
              <div class="row"><div class="box w233"><svg class="ico" width="23" height="23"><path d="M6 14l1-3 7-7 2 2-7 7z" fill="#666" /><path d="M4 17.500h13" stroke="#b9b3b1" stroke-width="2" /></svg><span class="in">?</span></div></div>
              <div class="row gap"><div class="box w113"><svg class="ico" width="75" height="23" fill="#777"><path d="M4.500 11.500h1.500v1.500h-1.500zM8 11h3v3H8zM12 10h4.500v4H12z" /></svg><FitText class="unit" t="PT" :w="10" :s="7.500" /><b class="arr s"></b></div><div class="box w113"><svg class="ico" width="20" height="23"><path d="M4 8h12M4 11.500h12" stroke="#888" stroke-width="1.600" /><path d="M4 14h12M4 16.500h12" stroke="#999" stroke-dasharray="2 1" /></svg><FitText class="grey z" t="Solid" :w="28.500" :s="12.800" /><b class="arr s"></b></div></div>
              <div class="row gap"><div class="box w73"><FitText class="grey" t="Style" :w="29" :s="12.800" /><b class="arr s"></b></div><div class="box w73"><FitText class="grey" t="Start" :w="27.500" :s="12.800" /><b class="arr s"></b></div><div class="box w73"><FitText class="grey" t="End" :w="23" :s="12.800" /><b class="arr s"></b></div></div>
            </div>
          </aside>
        </div>
      </main>
    </div>
  </div>
</template>

<style>
body { margin: 0; overflow: hidden; }
</style>

<style scoped>
* { box-sizing: border-box; }
svg { display: block; flex: none; }
.desktop { width: 1600px; height: 900px; overflow: hidden; font-family: "Liberation Sans", Arial, sans-serif; display: flex; flex-direction: column; color: #111; }
.menubar { height: 24px; flex: none; background: linear-gradient(#5d5b52, #403f3a); color: #dfdbd2; display: flex; justify-content: space-between; padding: 3px 7px 0 6px; font-family: "Noto Sans", sans-serif; }
.win-title { font-weight: bold; }
.tray { display: flex; gap: 0; margin-top: -1px; }
.lang { width: 20px; height: 20px; margin: 0 13px 0 13px; background: #dfdbd2; color: #403f3a; border-radius: 2px; padding: 2px 4px; font-weight: 600; }
.mute { margin: 3px 16px 0 0; }
.clock { margin: 2px 13px 0 0; }
.below { display: flex; height: 876px; }
.launcher { width: 67px; flex: none; padding: 6px 0 6px 6px; display: flex; flex-direction: column; gap: 7px; border-right: 1px solid #6d86ae; background: linear-gradient(#35507e, #46608c 15%, #3e5b8b 40%, #2d4065 52%, #22304f 58%, #2b3e62 68%, #344970 78%, #2c3d62 90%, #253555); }
.tile { position: relative; width: 54px; height: 54px; border-radius: 4px; background: linear-gradient(rgba(255,255,255,.3), rgba(255,255,255,.12) 40%, rgba(255,255,255,.16)); box-shadow: inset 0 0 0 1px rgba(255,255,255,.18); }
.tile.dash { background: linear-gradient(#7181ae, #4d639e); }
.tile.on { background: linear-gradient(#b6a970, #ac9a3e); }
.tile.trash { margin-top: auto; }
.pip { position: absolute; top: 22px; border: 5px solid transparent; }
.pip.left { left: -6px; border-left-color: #ddd; border-right: 0; }
.pip.right { right: -6px; border-right-color: #ddd; border-left: 0; }
.chrome-win { width: 1533px; display: flex; flex-direction: column; }
.tabstrip { height: 29px; flex: none; display: flex; padding-left: 6px; background: linear-gradient(#3b3a35, #504e47); font-family: "Noto Sans", sans-serif; }
.tab { position: relative; width: 206px; height: 28px; margin: 1px -13px 0 0; display: flex; align-items: flex-start; padding: 6px 0 0 16px; color: #777; z-index: 1; }
.tab.active { z-index: 2; color: #555; }
.tab-shape { position: absolute; left: 0; top: 0; fill: #d0cecb; stroke: #aaa8a5; stroke-width: .7; }
.tab.active .tab-shape { fill: #f2f1ef; }
.favicon { position: relative; }
.tab-title { position: relative; width: 134px; margin: -1px 6px 0 6px; height: 20px; -webkit-mask-image: linear-gradient(90deg, #000 108px, transparent 134px); mask-image: linear-gradient(90deg, #000 108px, transparent 134px); }
.close { position: relative; margin-top: 3px; }
.newtab { margin: 8px 0 0 11px; }
.person { margin: 3px 5px 0 auto; width: 68px; height: 17px; border: 1px solid #7b7971; border-radius: 2px; color: #f4f2ee; padding: 0 0 0 8px; }
.m-small, .m-big { font-family: "Liberation Serif", serif; font-weight: bold; font-style: italic; fill: #fff; }
.m-big { font-size: 38px; stroke: #fff; stroke-width: 1; }
.m-small { font-size: 17px; }
.urlbar { height: 37px; flex: none; background: #f2f1ef; border-bottom: 1px solid #ccc; display: flex; font-family: "Noto Sans", sans-serif; }
.urlbar > svg:first-child { margin-top: -1px; }
.omnibox { width: 1405px; height: 28px; margin-top: 4px; border: 1px solid #b3b1af; border-radius: 3px; background: #fff; display: flex; align-items: center; padding: 0 6px 0 9px; }
.secure { margin: 0 0 1px 7px; color: #0b8043; }
.sep { width: 1px; height: 16px; background: #bbb; margin: 0 7px 0 9.500px; }
.url { font-size: 14px; margin-top: -1px; }
.star { margin-left: auto; }
.dots { margin: 11px 0 0 17px; }
.apphead { height: 50px; flex: none; background: #f5f5f5; border-bottom: 1px solid #ccc; display: flex; padding-right: 6px; }
.logo { width: 50px; height: 50px; background: #006be5; }
.redlock { margin: 16px 0 0 15.500px; }
.project { width: 166px; margin: 8px 0 0 12px; display: flex; flex-direction: column; gap: 2px; }
.tool { display: flex; flex-direction: column; align-items: center; padding-top: 6px; font-size: 10px; line-height: 12px; color: #111; white-space: nowrap; }
.tool span { margin-top: 1.500px; }
.ws { margin-left: 7px; }
.dim { color: #888; }
.w49 { width: 49px; } .w119 { width: 119.500px; } .w60 { width: 60px; } .w50 { width: 50px; } .w59 { width: 59px; } .w56 { width: 56px; }
.spacer { flex: 1; }
.login { color: #0b6bdf; margin: 15px 14px 0 0; }
.signup { width: 133px; height: 30px; margin: 9px 9px 0 0; border-radius: 3px; background: linear-gradient(#0070e6, #0061cf); border: 1px solid #0055b8; color: #fff; padding: 7px 0 0 6px; display: flex; gap: 5px; }
.workspace { display: flex; height: 760px; }
.leftnav { width: 51px; border-right: 1px solid #ccc; background: #f7f7f7; display: flex; flex-direction: column; }
.nav { height: 55px; width: 50px; display: flex; flex-direction: column; align-items: center; padding-top: 5px; font-size: 8.650px; line-height: 10px; color: #666; }
.nav svg { margin-bottom: 2px; flex: none; }
.nav.sel { background: #fff; color: #0b6bdf; height: 54px; width: 51px; padding-right: 1px; border-bottom: 1px solid #ccc; margin-bottom: 1px; padding-top: 5px; }
.nav.support { margin-top: auto; height: 48px; padding-top: 0; }
.nav.support svg { margin-top: -1px; }
.stencils { width: 208px; border-right: 1px solid #ccc; background: #fff; display: flex; flex-direction: column; }
.search { margin: 7px 0 7px 7px; width: 193px; height: 25px; border: 1px solid #c4c4c4; border-radius: 3px; display: flex; align-items: center; padding-left: 7px; gap: 4.500px; color: #999; }
.scroller { height: 676px; border-top: 1px solid #e8e8e8; display: flex; overflow: hidden; }
.inner { width: 192px; }
.sbar { width: 15px; background: #f1f1f1; }
.common { height: 23px; border-bottom: 1px solid #e8e8e8; display: flex; justify-content: space-between; align-items: center; padding: 0 6.500px 3px 8px; color: #0b6bdf; }
.grid { display: grid; grid-template-columns: 96px 96px; grid-auto-rows: 97px; }
.cell { border-bottom: 1px solid #e8e8e8; display: flex; flex-direction: column; align-items: center; color: #666; }
.cell:nth-child(odd) { border-right: 1px solid #e8e8e8; }
.pv { fill: #444; align-self: flex-start; margin-left: -.5px; }
.noto { font-family: "Noto Sans", sans-serif; }
.plan { flex: 1; border-top: 1px solid #ccc; padding: 5px 0 0 5px; }
.planrow { display: flex; margin-top: 1px; align-items: flex-start; }
.bar { width: 112px; height: 7px; margin: 5px 15px 0 0; border: 1px solid #006be5; border-radius: 4px; overflow: hidden; }
.bar i { display: block; width: 8px; height: 5px; background: #006be5; }
.upgrade { width: 54px; height: 19px; border-radius: 2px; background: #006be0; border: 1px solid #0055b8; color: #fff; padding: 3px 0 0 7.500px; }
.board { width: 1014px; display: flex; flex-direction: column; }
.ruler-h, .ruler-v { background: #fff; font-size: 10px; fill: #aaa; }
.tick { stroke: #ccc; }
.lower { display: flex; }
.view { width: 995px; display: grid; grid-template-columns: 980px 15px; }
.canvas { background: #ededed; fill: #111; }
.vbar, .hbar { background: #f1f1f1; }
.serif { font-family: "Liberation Serif", serif; fill: #000; }
.semi { stroke: #000; stroke-width: .55; }
.head { font-size: 15px; stroke: #000; stroke-width: .15; }
.props { width: 260px; border-left: 1px solid #ccc; background: #f5f5f5; display: flex; flex-direction: column; }
.ph { padding: 5px 9px 0 10px; color: #555; border-top: 1px solid #e6e6e6; border-bottom: 1px solid #d6d6d6; display: flex; justify-content: space-between; flex: none; }
.ph.white { background: #fff; }
.h22 { height: 24px; } .h23 { height: 25px; padding-top: 6px; }
.pb { padding-left: 13px; flex: none; }
.info { padding-top: 13px; height: 120px; }
.card { background: #fff; width: 233px; height: 94px; padding: 13px 0 0 13px; color: #6d6d6d; display: flex; flex-direction: column; gap: 2px; }
.b { font-weight: bold; color: #666; }
.clear { color: #0b6bdf; margin-top: 6px; }
.text { height: 170px; padding-top: 13px; }
.row { display: flex; gap: 6px; margin-bottom: 6px; }
.row.gap { gap: 7px; margin-bottom: 7px; }
.box { height: 25px; border: 1px solid #b8b8b8; border-radius: 3px; background: #fff; display: flex; }
.h26 { height: 26px; }
.w147 { width: 147px; } .w80 { width: 80px; } .w126 { width: 126px; margin-right: 1px; } .w100 { width: 100px; } .w233 { width: 233px; } .w113 { width: 113px; } .w73 { width: 73px; }
.box .grey { margin: 3px 0 0 5px; color: #8f8f8f; }
.box .grey.n { margin-left: 4px; margin-top: 5px; }
.box .grey.z { margin-left: -1px; }
.unit { margin-top: 9px; color: #c5c5c5; }
.arr { margin-left: auto; width: 22px; border-left: 1px solid #b8b8b8; display: flex; }
.arr.s { width: 21px; }
.arr::before { content: ""; margin: 9px 0 0 5.500px; height: 0; border: 5px solid transparent; border-top: 10px solid #555; border-bottom: 0; }
.in { flex: 1; margin: 1px 1px 1px 0; border: 1px solid #ccc; font: bold 10px/20px "Liberation Sans", sans-serif; color: #888; text-align: center; }
.seg { width: 230px; height: 22px; margin-bottom: 7px; border: 1px solid #ccc; border-radius: 3px; display: flex; }
.seg:nth-child(3) { margin-top: 7px; }
.seg.h23x { height: 23px; }
.seg span { flex: 1; display: flex; align-items: center; justify-content: center; }
.seg span + span { border-left: 1px solid #ccc; }
.seg svg { width: 11px; height: 11px; overflow: visible; }
.fills, .conn { padding-top: 13px; }
.fills { height: 114px; }
.ph.rc { height: 23px; background: #ededed; border-bottom: 0; color: #888; border-top-color: #d6d6d6; }
.conn { height: 115px; border-bottom: 1px solid #d6d6d6; }
.conn .row.gap { margin-bottom: 6px; }
</style>
